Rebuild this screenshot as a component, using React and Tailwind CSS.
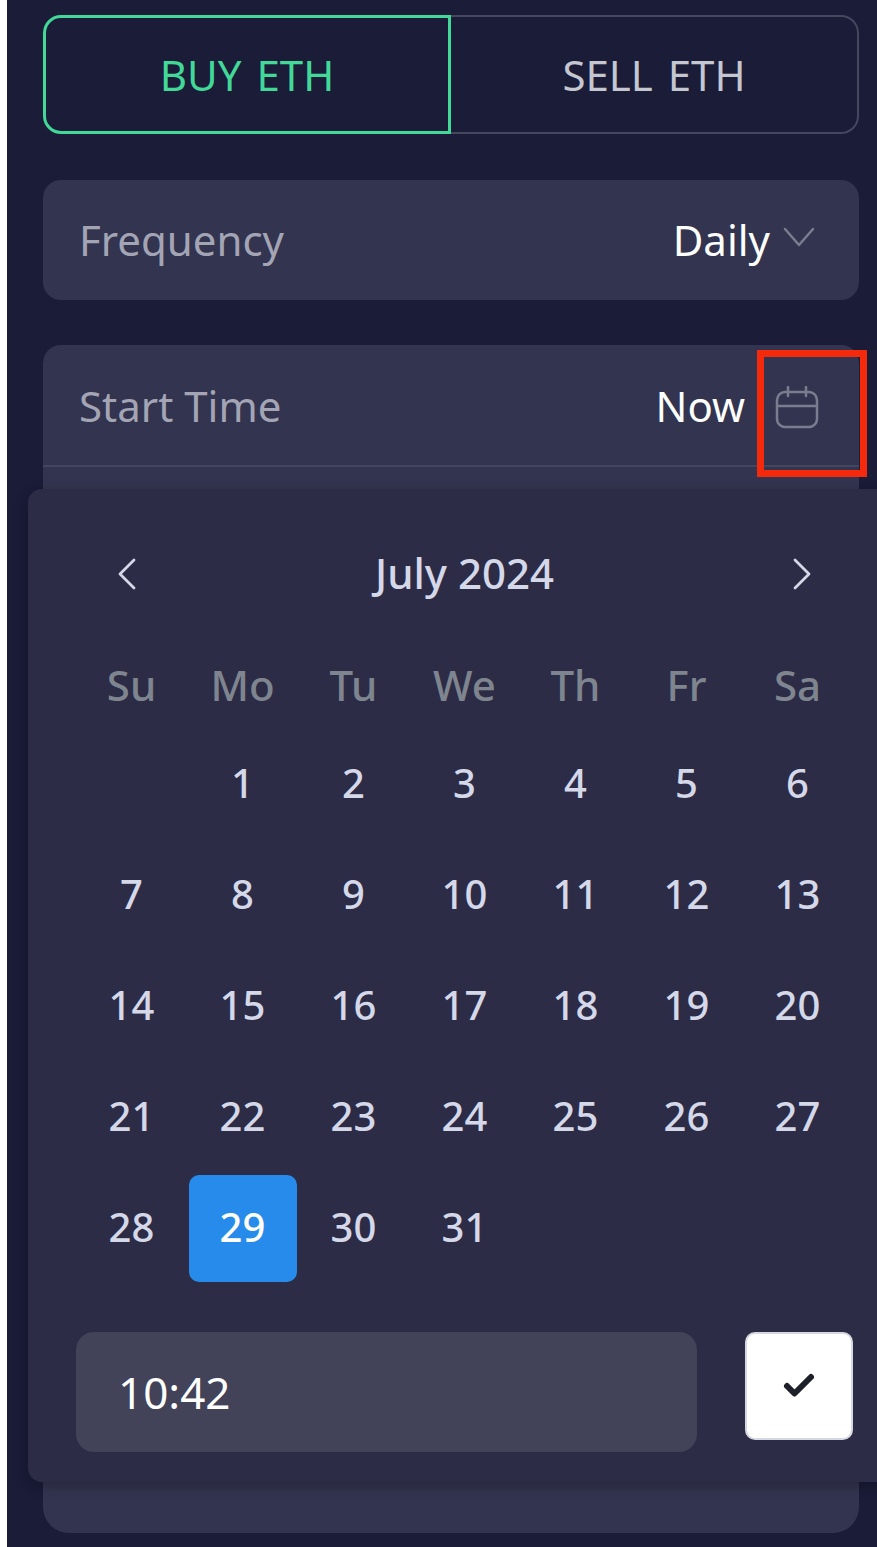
import { ChevronLeft, ChevronRight, Check } from "lucide-react"

const dayNames = ["Su", "Mo", "Tu", "We", "Th", "Fr", "Sa"]

const days = [
    "", 1, 2, 3, 4, 5, 6,
    7, 8, 9, 10, 11, 12, 13,
    14, 15, 16, 17, 18, 19, 20,
    21, 22, 23, 24, 25, 26, 27,
    28, 29, 30, 31,
]

const CalendarIcon = () => (
    <svg width="44" height="44" viewBox="0 0 44 44" fill="none" stroke="#7a7d8f" strokeWidth="2.5" strokeLinecap="round" strokeLinejoin="round" className="mt-[5px]">
        <rect x="2" y="6" width="40" height="35" rx="8" />
        <path d="M2 20h40" />
        <path d="M13 1v9" />
        <path d="M31 1v9" />
    </svg>
)

const DownIcon = () => (
    <svg width="32" height="20" viewBox="0 0 32 20" fill="none" stroke="#7a7d8f" strokeWidth="2.5" strokeLinecap="round" strokeLinejoin="round" className="-mt-[4px]">
        <path d="M2 2l14 16L30 2" />
    </svg>
)

const App = () => {
    return (
        <div className="h-[1547px] w-[877px] overflow-hidden bg-white pl-[7px] font-['Noto_Sans',sans-serif]">
            <div className="relative h-full bg-[#1a1c38] pl-[36px] pr-[18px] pt-[15px]">

                {/* Buy / Sell */}
                <div className="flex h-[119px] text-[42px] [word-spacing:4px]">
                    <div className="flex w-[408px] items-center justify-center rounded-l-[18px] border-[3px] border-[#42d898] text-[#42d898]">
                        BUY ETH
                    </div>
                    <div className="flex flex-1 items-center justify-center rounded-r-[18px] border-2 border-l-0 border-[#45475e] text-[#c4c6d0]">
                        SELL ETH
                    </div>
                </div>

                {/* Frequency */}
                <div className="mt-[46px] flex h-[120px] items-center justify-between rounded-[18px] bg-[#33344f] pb-[2px] pl-[36px] pr-[44px] text-[42px]">
                    <span className="text-[#a3a5b5]">Frequency</span>
                    <div className="flex items-center gap-[13px]">
                        <span className="text-white">Daily</span>
                        <DownIcon />
                    </div>
                </div>

                {/* Start time */}
                <div className="mt-[45px] h-[1188px] rounded-t-[18px] rounded-b-[26px] bg-[#33344f]">
                    <div className="flex h-[122px] items-center justify-between border-b-2 border-[#44455e] pl-[36px] pr-[40px] text-[42px]">
                        <span className="text-[#a3a5b5]">Start Time</span>
                        <div className="flex items-center gap-[30px]">
                            <span className="text-white">Now</span>
                            <CalendarIcon />
                        </div>
                    </div>
                </div>

                {/* Highlight */}
                <div className="absolute left-[750px] top-[350px] h-[127px] w-[110px] border-[7px] border-[#f52a0c]" />

                {/* Date picker popup */}
                <div className="absolute left-[21px] top-[489px] h-[993px] w-[900px] rounded-[14px] bg-[#2c2c47] pl-[48px] shadow-[0_4px_14px_rgba(0,0,0,0.25)]">
                    <div className="flex h-[170px] w-[777px] items-center justify-between pl-[23px] pr-[23px]">
                        <ChevronLeft size={56} strokeWidth={1.2} className="text-[#d5d8e8]" />
                        <span className="pb-[3px] text-[42px] font-medium text-[#d5d8e8]">July 2024</span>
                        <ChevronRight size={56} strokeWidth={1.2} className="text-[#d5d8e8]" />
                    </div>

                    <div className="grid w-[777px] grid-cols-7">
                        {dayNames.map((d) => (
                            <div key={d} className="flex h-[54px] items-center justify-center pb-[4px] text-[42px] font-medium text-[#7f858f]">
                                {d}
                            </div>
                        ))}
                    </div>

                    <div className="mt-[16px] grid w-[777px] grid-cols-7 auto-rows-[111px]">
                        {days.map((d, i) => (
                            <div key={i} className="flex items-center justify-center">
                                {d === 29 ? (
                                    <div className="flex h-[107px] w-[108px] items-center justify-center rounded-[10px] bg-[#268bea] pb-[4px] text-[40px] font-medium text-white">
                                        {d}
                                    </div>
                                ) : (
                                    <span className="pb-[4px] text-[40px] font-medium text-[#d5d8e8]">{d}</span>
                                )}
                            </div>
                        ))}
                    </div>

                    {/* Time row */}
                    <div className="mt-[48px] flex w-[777px] items-start justify-between">
                        <div className="flex h-[120px] w-[621px] items-center rounded-[18px] bg-[#424259] pl-[42px] text-[44px] text-white">
                            10:42
                        </div>
                        <button className="flex h-[108px] w-[108px] items-center justify-center rounded-[10px] border-2 border-[#d5d8e0] bg-white">
                            <Check size={36} strokeWidth={4} className="text-[#1e2029]" />
                        </button>
                    </div>
                </div>
            </div>
        </div>
    )
}

export default App
